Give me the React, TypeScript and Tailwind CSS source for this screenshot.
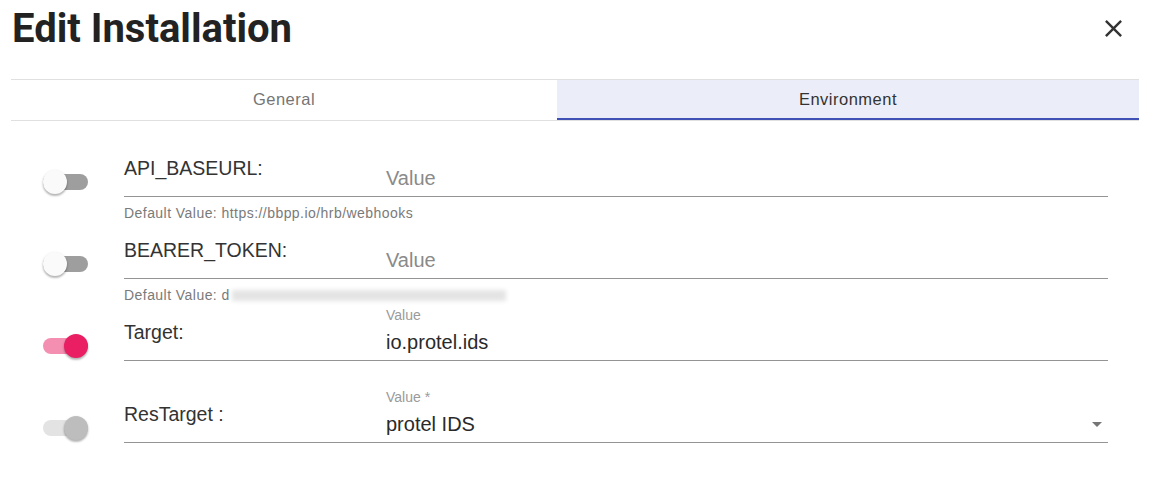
import React from "react";

type SwitchState = "off" | "on" | "disabledOn";

function Toggle({ state }: { state: SwitchState }) {
  const track =
    state === "off" ? "bg-[#9e9e9e]" : state === "on" ? "bg-[#f48fb1]" : "bg-[#e3e3e3]";
  const thumb =
    state === "off"
      ? "bg-[#fafafa] left-0"
      : state === "on"
      ? "bg-[#e91e63] left-[21px]"
      : "bg-[#bdbdbd] left-[21px]";
  return (
    <div className="relative w-[45px] h-[24px]">
      <div className={`absolute left-0 top-[4px] w-[45px] h-[16px] rounded-full ${track}`} />
      <div
        className={`absolute top-0 w-[24px] h-[24px] rounded-full shadow-[0_2px_2px_rgba(0,0,0,0.22),0_1px_3px_rgba(0,0,0,0.14)] ${thumb}`}
      />
    </div>
  );
}

function Row({
  state,
  label,
  small,
  value,
  placeholder,
  helper,
  select,
}: {
  state: SwitchState;
  label: string;
  small?: string;
  value?: string;
  placeholder?: string;
  helper?: React.ReactNode;
  select?: boolean;
}) {
  return (
    <div className="flex items-start h-[82px]">
      <div className="w-[124px] pl-[43px] pt-[29px] shrink-0">
        <Toggle state={state} />
      </div>
      <div className="w-[984px] flex flex-col">
        <div className="h-[56px] flex border-b border-[#949494]">
          <div className="w-[262px] shrink-0 flex items-center text-[19.5px] leading-[22px] text-[#333] pb-[1px]">
            {label}
          </div>
          <div className="flex-1 flex flex-col pt-[1px]">
            <div className="h-[18px] text-[14px] leading-[18px] text-[#9a9a9a]">{small ?? ""}</div>
            <div className="mt-[6px] h-[24px] flex items-center justify-between">
              <span
                className={`text-[20px] leading-[24px] ${
                  value ? "text-[#2a2a2a]" : "text-[#8a8a8a]"
                }`}
              >
                {value ?? placeholder}
              </span>
              {select && (
                <svg width="24" height="24" viewBox="0 0 24 24" className="mr-[-1px]">
                  <path d="M7 10l5 5 5-5z" fill="#757575" />
                </svg>
              )}
            </div>
          </div>
        </div>
        {helper && (
          <div className="pt-[8px] text-[14px] leading-[16px] tracking-[0.45px] text-[#7a7a7a] flex items-center">
            {helper}
          </div>
        )}
      </div>
    </div>
  );
}

export default function App() {
  return (
    <div
      className="w-[1154px] h-[503px] bg-white overflow-hidden"
      style={{ fontFamily: "'Liberation Sans', Arial, sans-serif" }}
    >
      <div className="h-[57px] flex items-center justify-between pl-[12px] pr-[26px]">
        <h1
          className="text-[40px] leading-[48px] font-bold text-[#222]"
          style={{ fontFamily: "Roboto, 'Liberation Sans', sans-serif" }}
        >
          Edit Installation
        </h1>
        <svg width="29" height="29" viewBox="0 0 24 24">
          <path
            d="M19 6.41 17.59 5 12 10.59 6.41 5 5 6.41 10.59 12 5 17.59 6.41 19 12 13.41 17.59 19 19 17.59 13.41 12z"
            fill="#333"
          />
        </svg>
      </div>
      <div className="mt-[22px] ml-[11px] mr-[15px] border-t border-b border-[#e0e0e0] flex h-[42px]">
        <div className="w-[546px] flex items-center justify-center pb-[2px] text-[16.5px] tracking-[0.5px] text-[#757575]">
          General
        </div>
        <div className="flex-1 relative bg-[#ebeef8] flex items-center justify-center pb-[2px] text-[16.5px] tracking-[0.5px] text-[#333]">
          Environment
          <div className="absolute left-0 right-0 bottom-0 h-[2px] bg-[#3f51b5]" />
        </div>
      </div>
      <div className="pt-[20px]">
        <Row
          state="off"
          label="API_BASEURL:"
          placeholder="Value"
          helper={<span>Default Value: https://bbpp.io/hrb/webhooks</span>}
        />
        <Row
          state="off"
          label="BEARER_TOKEN:"
          placeholder="Value"
          helper={
            <>
              <span>Default Value: d</span>
              <span className="inline-block ml-[2px] w-[274px] h-[11px] bg-[#e4e4e4] blur-[2px]" />
            </>
          }
        />
        <Row state="on" label="Target:" small="Value" value="io.protel.ids" />
        <Row state="disabledOn" label="ResTarget :" small="Value *" value="protel IDS" select />
      </div>
    </div>
  );
}
